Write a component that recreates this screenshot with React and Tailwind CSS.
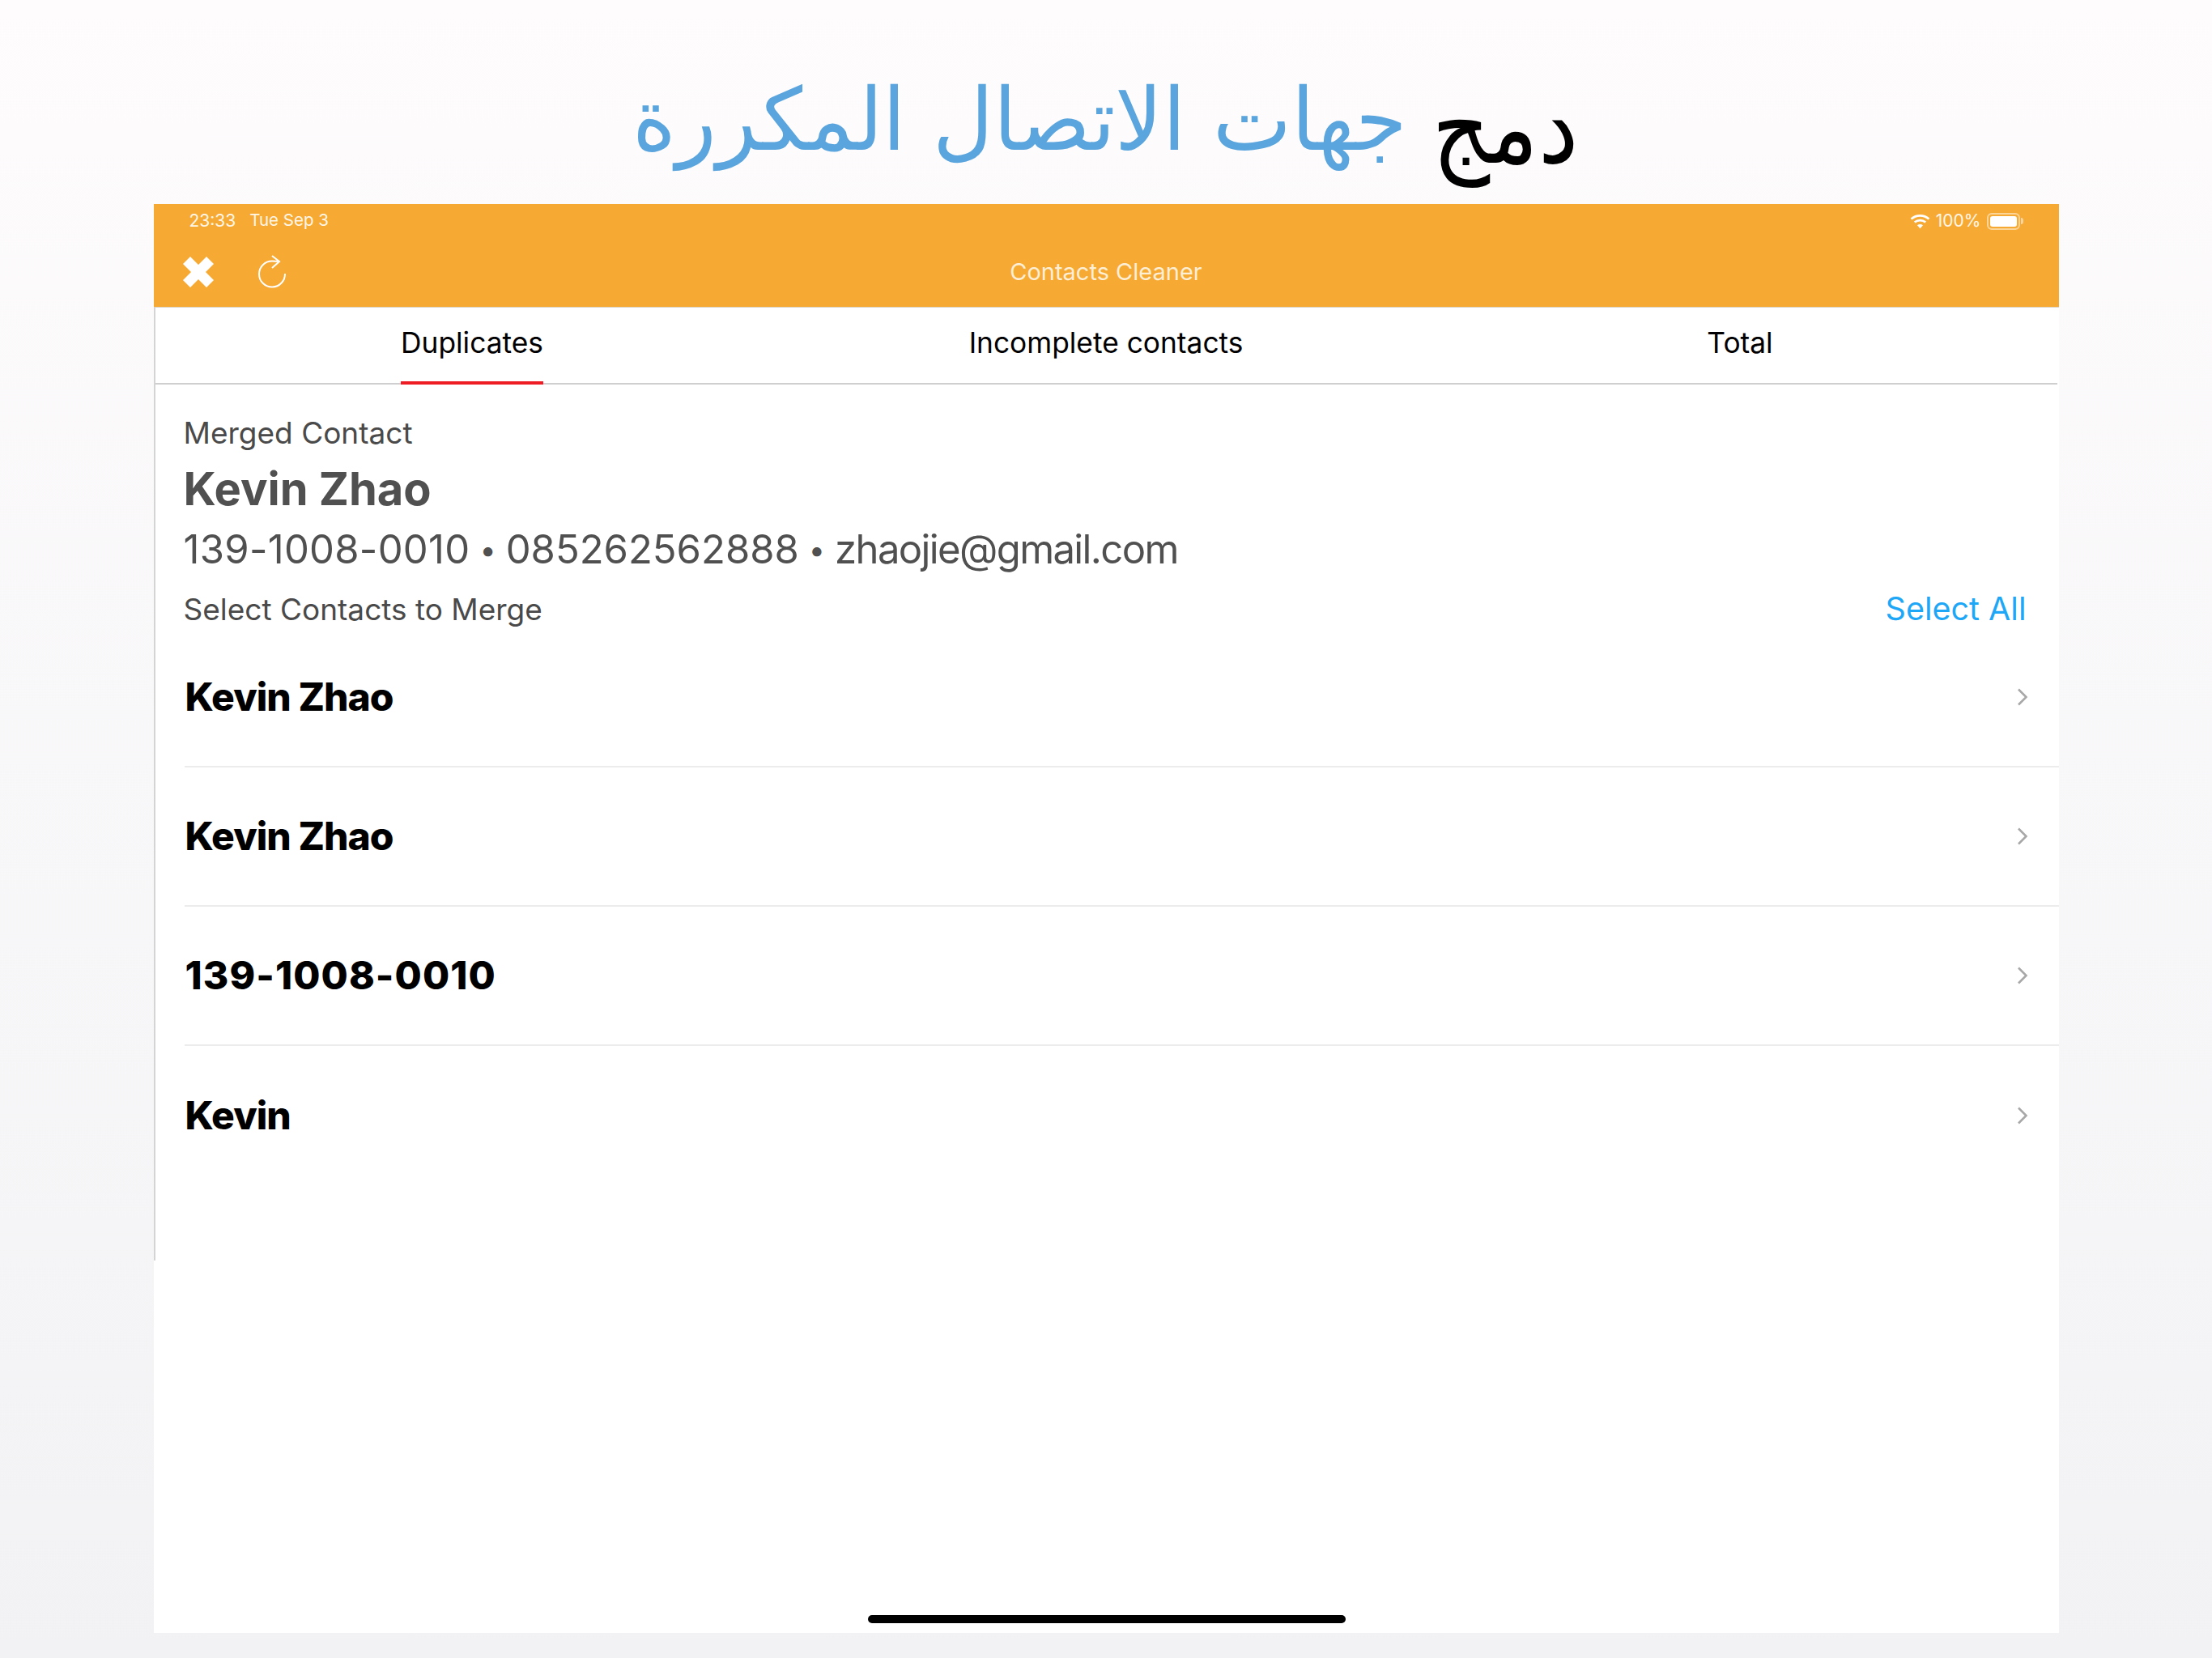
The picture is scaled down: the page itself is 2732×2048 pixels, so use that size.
import React from "react";

const rows = ["Kevin Zhao", "Kevin Zhao", "139-1008-0010", "Kevin"];

function Wifi() {
  return (
    <svg width="25" height="19" viewBox="0 0 24 18" fill="none" stroke="white" strokeWidth="2.6">
      <path d="M1.5 6.2C7.5 .9 16.5 .9 22.5 6.2" />
      <path d="M5.5 10C9.3 6.8 14.7 6.8 18.5 10" />
      <path d="M12 17.5 8.6 13.6C10.6 12.1 13.4 12.1 15.4 13.6Z" fill="white" stroke="none" />
    </svg>
  );
}

function Battery() {
  return (
    <div className="flex items-center">
      <div className="w-[41px] h-[21px] rounded-[6px] border-2 border-[#fbd597] p-[2px]">
        <div className="w-full h-full bg-white rounded-[3px]" />
      </div>
      <div className="w-[3px] h-[8px] bg-[#fbd597] rounded-r-full ml-[1px]" />
    </div>
  );
}

function Chevron() {
  return (
    <svg width="14" height="22" viewBox="0 0 14 22" fill="none" stroke="#a8a8a8" strokeWidth="2.6">
      <path d="M2 1.5 11.5 11 2 20.5" />
    </svg>
  );
}

export default function App() {
  return (
    <div className="w-[2732px] h-[2048px] overflow-hidden flex flex-col items-center bg-gradient-to-b from-[#fefcfd] to-[#f2f2f4] font-['Inter',sans-serif]">
      <div className="h-[252px] flex items-center justify-center">
        <div dir="rtl" className="flex items-start gap-[24px] font-['DejaVu_Sans',sans-serif] text-[107px] leading-none pt-[44px] pr-[22px] whitespace-nowrap">
          <span className="text-black origin-top scale-x-[1.04] scale-y-[1.18]">دمج</span>
          <span className="text-[#5aa5dd] font-extralight scale-x-[0.963] -mr-[8px]">جهات الاتصال المكررة</span>
        </div>
      </div>
      <div className="w-[2353px] h-[1765px] bg-white flex flex-col relative">
        <div className="h-[128px] bg-[#f6aa33] text-white border-b border-[#d9d2c5]">
          <div className="h-[40px] px-[44px] flex items-center justify-between pt-[2px] text-[21px] text-[#fff6e8]">
            <div className="flex gap-[17px]">
              <span>23:33</span>
              <span className="text-[20.5px]">Tue Sep 3</span>
            </div>
            <div className="flex items-center gap-[7px]">
              <Wifi />
              <span>100%</span>
              <Battery />
            </div>
          </div>
          <div className="h-[87px] px-[36px] flex items-center relative">
            <div className="flex items-center gap-[52px]">
              <svg width="38" height="38" viewBox="0 0 38 38">
                <path d="M9 0 19 10 29 0 38 9 28 19 38 29 29 38 19 28 9 38 0 29 10 19 0 9Z" fill="white" />
              </svg>
              <svg width="40" height="46" viewBox="0 0 40 46" fill="none" stroke="white" strokeWidth="2">
                <path d="M20 9.5A16 16 0 1 0 36 25" />
                <path d="M20 9.5 29 10M20 3 29 10 20 18" />
              </svg>
            </div>
            <div className="flex-1 text-center text-[29px] text-[#fdeed6] pr-[130px]">Contacts Cleaner</div>
          </div>
        </div>
        <div className="flex-1 flex flex-col">
          <div className="h-[1177px] border-l-2 border-[#d4d4d4] flex flex-col">
            <div className="h-[95px] grid grid-cols-3 border-b-2 border-[#cfcfcf] text-[35.3px] text-black mr-[2px]">
              <div className="flex justify-center">
                <div className="h-[95px] border-b-4 border-[#ee1c25] flex items-center pb-[2px]">Duplicates</div>
              </div>
              <div className="flex justify-center items-center pb-[6px]">Incomplete contacts</div>
              <div className="flex justify-center items-center pb-[6px]">Total</div>
            </div>
            <div className="pl-[35px] pr-[40px] pt-[32px] flex flex-col">
              <div className="text-[37px] leading-[56px] text-[#4a4a4a]">Merged Contact</div>
              <div className="text-[56px] leading-[70px] font-bold text-[#505050] mt-[6px]">Kevin Zhao</div>
              <div className="text-[49px] leading-[70px] text-[#505050] mt-[5px] flex items-center whitespace-nowrap">
                <span className="tracking-[0.27px]">139-1008-0010</span>
                <span className="text-[36px] mx-[12px]">•</span>
                <span>085262562888</span>
                <span className="text-[36px] mx-[12px]">•</span>
                <span className="tracking-[-0.033em]">zhaojie@gmail.com</span>
              </div>
              <div className="flex justify-between items-center h-[44px] mt-[17px] text-[37px] text-[#4a4a4a]">
                <span>Select Contacts to Merge</span>
                <span className="text-[39.5px] text-[#1fa7f7]">Select All</span>
              </div>
            </div>
            <div className="pl-[36px] mt-[1px] flex flex-col">
              {rows.map((r, i) => (
                <div key={i} className={"h-[172px] flex items-center justify-between pr-[38px] " + (i < 3 ? "border-b-2 border-[#ececec]" : "")}>
                  <span className={"ml-[1px] text-[48px] font-extrabold text-black " + (i === 2 ? "tracking-[1.1px]" : "tracking-[-0.02em]")}>{r}</span>
                  <Chevron />
                </div>
              ))}
            </div>
          </div>
        </div>
        <div className="absolute left-[882px] bottom-[12px] w-[590px] h-[10px] bg-black rounded-full" />
      </div>
    </div>
  );
}
